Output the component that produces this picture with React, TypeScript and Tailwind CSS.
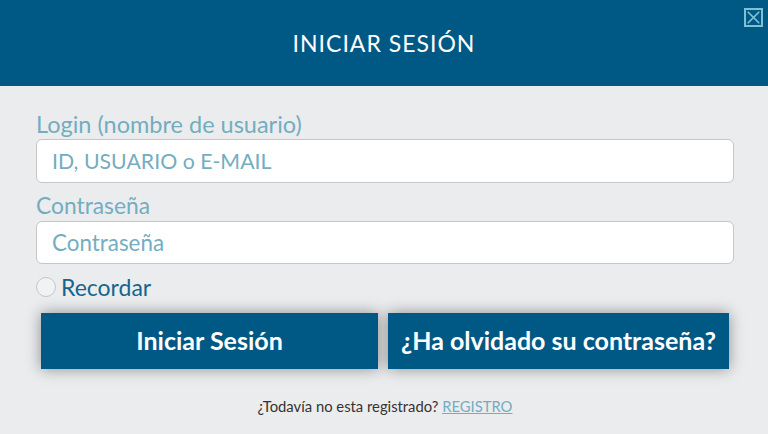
import { X } from "lucide-react";

export default function App() {
  return (
    <div className="h-[434px] w-[768px] overflow-hidden bg-[#ebecee] font-['Lato',sans-serif]">
      {/* Header */}
      <header className="relative flex h-[86px] items-center justify-center bg-[#005985]">
        <h1 className="text-[23px] tracking-[1px] text-white">INICIAR SESIÓN</h1>
        <button className="absolute right-[5px] top-[8px] flex h-[19px] w-[19px] items-center justify-center border-2 border-[#7fc0d2] text-[#7fc0d2]">
          <X size={21} strokeWidth={2} className="shrink-0" />
        </button>
      </header>

      {/* Form */}
      <main className="flex flex-col pl-[36px] pr-[34px] pt-[24px]">
        <label className="text-[23.5px] leading-[29px] text-[#74adc0]">Login (nombre de usuario)</label>
        <div className="flex h-[44px] items-center rounded-[6px] border border-[#c4c6c8] bg-white pl-[15px] pt-[2px] text-[21.3px] text-[#74adc0]">
          ID, USUARIO o E-MAIL
        </div>
        <label className="mt-[8px] text-[22.8px] leading-[29px] text-[#74adc0]">Contraseña</label>
        <div className="mt-[1px] flex h-[43px] items-center rounded-[6px] border border-[#c4c6c8] bg-white pl-[15px] text-[22.4px] text-[#74adc0]">
          Contraseña
        </div>
        <div className="mt-[8px] flex h-[29px] items-center gap-[5px]">
          <span className="h-[20px] w-[20px] rounded-full border border-[#c4c6c8] bg-[#f1f2f3]" />
          <span className="pt-[1px] text-[23px] text-[#13668f]">Recordar</span>
        </div>
        <div className="mt-[12px] flex gap-[10px] pl-[5px]">
          <button className="h-[56px] w-[337px] shrink-0 bg-[#005985] text-[25px] font-bold text-white shadow-[0_0_14px_rgba(0,0,0,0.4)]">
            Iniciar Sesión
          </button>
          <button className="h-[56px] w-[341px] shrink-0 bg-[#005985] text-[25px] font-bold text-white shadow-[0_0_14px_rgba(0,0,0,0.4)]">
            ¿Ha olvidado su contraseña?
          </button>
        </div>
        <p className="mt-[26px] text-center text-[14.8px] text-[#333333]">
          ¿Todavía no esta registrado? <a className="text-[#74adc0] underline">REGISTRO</a>
        </p>
      </main>
    </div>
  );
}
